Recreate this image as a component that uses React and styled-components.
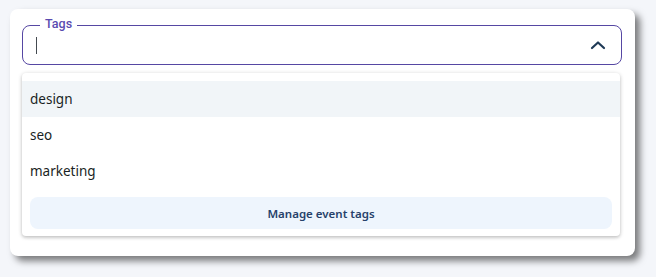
import React from "react";
import styled, { createGlobalStyle } from "styled-components";

const GlobalStyle = createGlobalStyle`
  html, body {
    margin: 0;
    padding: 0;
    background: #f4f6fa;
  }
  body {
    font-family: "Noto Sans", "Open Sans", sans-serif;
  }
`;

const tags = ["design", "seo", "marketing"];

export default function App() {
  return (
    <>
      <GlobalStyle />
      <Page>
        <Card>
          <Field>
            <Label>Tags</Label>
            <Caret />
            <Chevron width="16" height="10" viewBox="0 0 16 10">
              <polyline
                points="2,8 8,2.5 14,8"
                fill="none"
                stroke="#1f3a56"
                strokeWidth="2.2"
                strokeLinecap="round"
                strokeLinejoin="round"
              />
            </Chevron>
          </Field>
          <Menu>
            {tags.map((tag, i) => (
              <Option key={tag} $active={i === 0}>
                {tag}
              </Option>
            ))}
            <ManageButton>Manage event tags</ManageButton>
          </Menu>
        </Card>
      </Page>
    </>
  );
}

const Page = styled.div`
  padding: 9px 21px 21px 10px;
`;

const Card = styled.div`
  width: 625px;
  height: 247px;
  box-sizing: border-box;
  padding: 16px 13px 0 12px;
  background: #ffffff;
  border-radius: 8px;
  box-shadow: 5px 5px 7px rgba(0, 0, 0, 0.5);
  display: flex;
  flex-direction: column;
  gap: 8px;
`;

const Field = styled.div`
  position: relative;
  height: 40px;
  box-sizing: border-box;
  border: 1px solid #5647a3;
  border-radius: 8px;
  display: flex;
  align-items: center;
  justify-content: space-between;
  padding: 0 15px 0 13px;
`;

const Label = styled.span`
  position: absolute;
  top: -10px;
  left: 17px;
  padding: 0 5px;
  background: #ffffff;
  font-family: Roboto, "Noto Sans", sans-serif;
  font-size: 12.5px;
  font-weight: 500;
  line-height: 16px;
  color: #5a4bb0;
`;

const Caret = styled.span`
  width: 1px;
  height: 17px;
  background: #444a50;
`;

const Chevron = styled.svg`
  display: block;
`;

const Menu = styled.div`
  width: 598px;
  box-sizing: border-box;
  padding: 8px 0 7px;
  background: #ffffff;
  border-radius: 4px;
  box-shadow: 0 1px 4px rgba(0, 0, 0, 0.22), 0 2px 3px rgba(0, 0, 0, 0.08);
  display: flex;
  flex-direction: column;
`;

const Option = styled.div`
  height: 36px;
  padding: 0 8px;
  display: flex;
  align-items: center;
  font-size: 13.5px;
  color: #1a1f24;
  background: ${(props) => (props.$active ? "#f1f5f8" : "transparent")};
`;

const ManageButton = styled.button`
  margin: 8px 8px 0;
  height: 32px;
  border: 0;
  border-radius: 8px;
  background: #eef5fd;
  font-family: "Noto Sans", "Open Sans", sans-serif;
  font-size: 11.5px;
  font-weight: 600;
  color: #26416a;
  cursor: pointer;
`;
